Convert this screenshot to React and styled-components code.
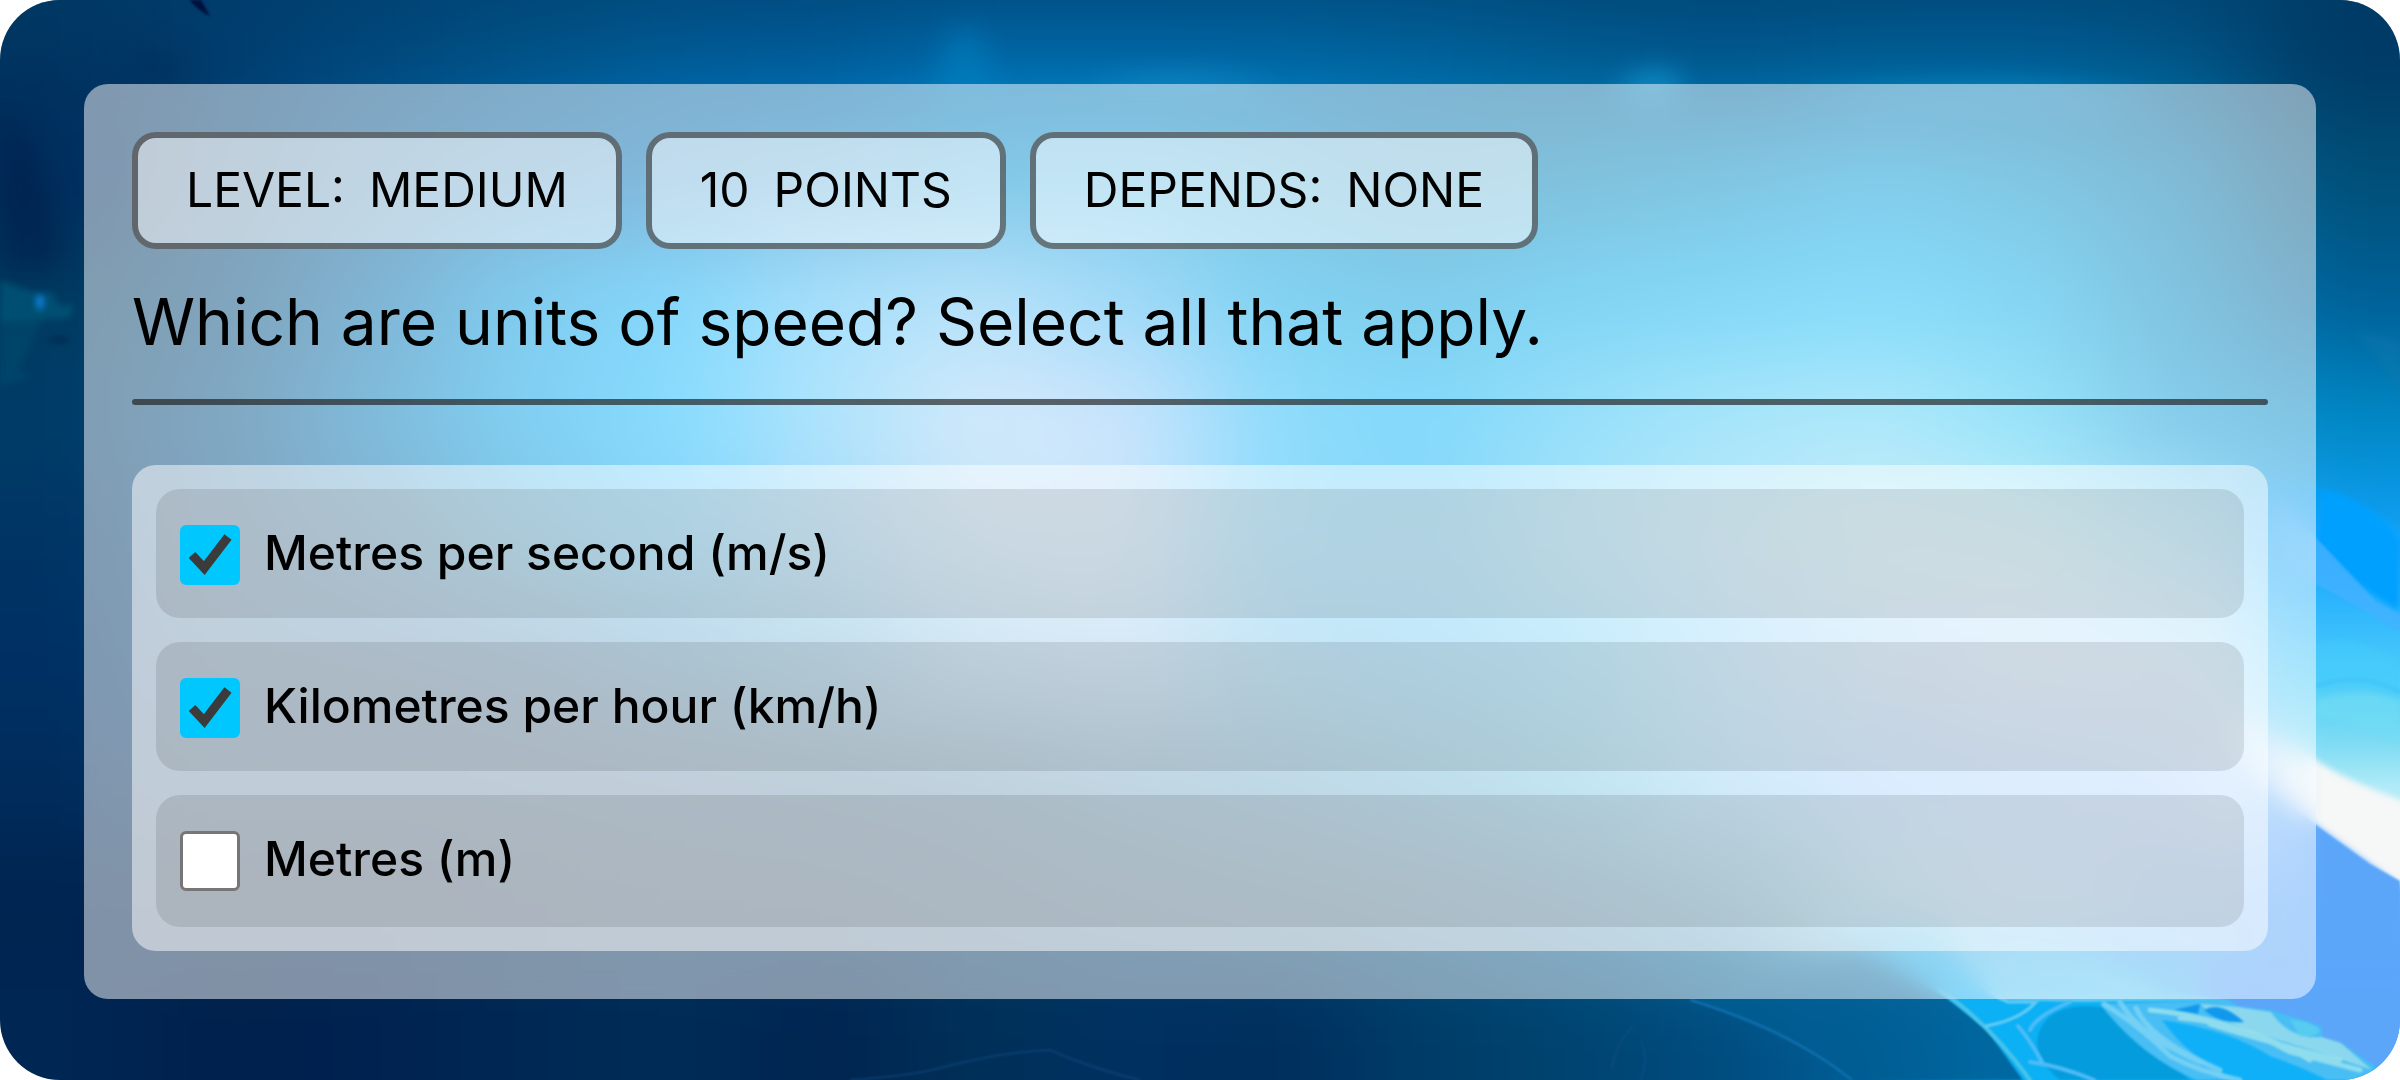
import React, { useState } from "react";
import styled, { createGlobalStyle } from "styled-components";

const GlobalStyle = createGlobalStyle`
  *, *::before, *::after { box-sizing: border-box; }
  body {
    margin: 0;
    background: #fff;
    color: #000;
    font-family: Inter, "Liberation Sans", sans-serif;
  }
`;

/* Soft colour field of the ice cave, one entry for each 150 x 120 cell. */
const CAVE = [
  "00335f 003d70 004a80 00568c 005f9c 0060a0 006cae 006cae 006cac 0068a4 006098 005a92 006098 00609a 005a8c 003a66",
  "002c5c 013f71 015791 0165a9 0171b9 047fc1 0191d1 0497d5 0189c5 0179b1 0185b9 018dc5 049bd9 0191c9 0179b1 005078",
  "003a60 014979 0169a9 019be1 09b1f9 51c1f9 71c5f5 41b5f1 01a5e5 019bd9 01a9e9 05b1f1 0db9f5 09ade9 0189c1 006098",
  "003c68 014f85 0179b9 01a1e9 11b9fd 61c9f9 a8d4f5 9acafa 21b9f9 05b5f9 31c1f5 51cdf5 61d1f5 31c9f5 0999d9 0088c4",
  "003464 004a81 00609f 008bc8 07a9f9 47b1ef 84c7f0 8ecaf4 18b2f6 11a9ef 47c3f4 71ccf2 8ed8f0 88dcf0 50c8f2 10a0f8",
  "003064 004073 004278 004a84 00639f 117cb1 479bd0 60a4da 1a96d5 089fe6 1ab1ef 5cc0fa 86c4f4 a0caf6 98d0f8 60d0f8",
  "002c5c 003664 003460 003864 003a68 00406e 004678 005889 00659b 0077b1 0896c8 47b1ef 6ab1fc 72b4fc 80b8fc c0e8ff",
  "002450 00284c 00264e 002c54 00305c 00315c 003964 00416f 004973 01517f 015d91 0979a9 51b9e1 82bef0 61a9f5 60a8fa",
  "002654 00204c 002250 002854 002c58 002450 003058 003060 002e5c 003c68 004470 004c80 006098 00a0e8 50c0f0 58a4f8",
].map((row) => row.split(" "));

const Backdrop = styled.svg`
  position: absolute;
  inset: 0;
  width: 100%;
  height: 100%;
`;

function IceCave() {
  return (
    <Backdrop viewBox="0 0 2400 1080" preserveAspectRatio="none" aria-hidden="true">
      <defs>
        <filter id="field" filterUnits="userSpaceOnUse" x="-300" y="-300" width="3000" height="1680" colorInterpolationFilters="sRGB">
          <feGaussianBlur stdDeviation="58 46" />
        </filter>
        <filter id="soft" filterUnits="userSpaceOnUse" x="-100" y="-100" width="2600" height="1280" colorInterpolationFilters="sRGB">
          <feGaussianBlur stdDeviation="14" />
        </filter>
        <filter id="mist" filterUnits="userSpaceOnUse" x="-100" y="-100" width="2600" height="1280" colorInterpolationFilters="sRGB">
          <feGaussianBlur stdDeviation="3" />
        </filter>
        <filter id="edge" filterUnits="userSpaceOnUse" x="-100" y="-100" width="2600" height="1280" colorInterpolationFilters="sRGB">
          <feGaussianBlur stdDeviation="1" />
        </filter>
        <linearGradient id="roof" x1="0" y1="0" x2="0" y2="1">
          <stop offset="0" stopColor="#003c68" stopOpacity="0.5" />
          <stop offset="1" stopColor="#003c68" stopOpacity="0" />
        </linearGradient>
        <linearGradient id="wave" x1="0" y1="485" x2="0" y2="790" gradientUnits="userSpaceOnUse">
          <stop offset="0" stopColor="#009cf4" />
          <stop offset="0.25" stopColor="#1ca8fc" />
          <stop offset="0.5" stopColor="#3cc0fc" />
          <stop offset="0.68" stopColor="#54d0f8" />
          <stop offset="0.85" stopColor="#80dcf4" />
          <stop offset="1" stopColor="#b4ecf8" />
        </linearGradient>
        <linearGradient id="fromLeft" x1="2220" y1="0" x2="2324" y2="0" gradientUnits="userSpaceOnUse">
          <stop offset="0" stopColor="#000" />
          <stop offset="1" stopColor="#fff" />
        </linearGradient>
        <linearGradient id="fromTop" x1="0" y1="890" x2="0" y2="1000" gradientUnits="userSpaceOnUse">
          <stop offset="0" stopColor="#000" />
          <stop offset="1" stopColor="#fff" />
        </linearGradient>
        <mask id="fadeLeft" maskUnits="userSpaceOnUse" x="2000" y="400" width="400" height="680">
          <rect x="2000" y="400" width="400" height="680" fill="url(#fromLeft)" />
        </mask>
        <mask id="fadeTop" maskUnits="userSpaceOnUse" x="1600" y="860" width="800" height="220">
          <rect x="1600" y="860" width="800" height="220" fill="url(#fromTop)" />
        </mask>
      </defs>
      <g filter="url(#field)">
        {CAVE.map((row, j) =>
          row.map((c, i) => {
            const left = i === 0 ? -300 : i * 150;
            const top = j === 0 ? -300 : j * 120;
            const right = i === 15 ? 2700 : (i + 1) * 150 + 1;
            const bottom = j === 8 ? 1380 : (j + 1) * 120 + 1;
            return <rect key={`${i}-${j}`} x={left} y={top} width={right - left} height={bottom - top} fill={`#${c}`} />;
          })
        )}
      </g>
      <rect width="2400" height="84" fill="url(#roof)" />

      {/* light falling from the roof */}
      <g filter="url(#soft)">
        <path d="M1080 90 Q1180 66 1280 90 Z" fill="#20a0d4" opacity="0.7" />
        <path d="M1610 100 Q1640 64 1676 76 L1680 100 Z" fill="#1090cc" />
        <path d="M1790 110 Q2000 66 2170 110 Z" fill="#0890cc" opacity="0.8" />
        <path d="M930 100 L950 30 L980 30 L1000 100 Z" fill="#0084c4" opacity="0.5" />
        <path d="M0 100 Q60 180 60 270 L0 270 Z" fill="#001c48" opacity="0.5" />
        <path d="M130 60 Q160 40 190 66 L170 84 H130 Z" fill="#002c54" opacity="0.5" />
      </g>
      <g filter="url(#mist)">
        <path d="M2350 332 Q2380 334 2400 342 V400 Q2380 350 2350 332 Z" fill="#1078ac" opacity="0.4" />
      </g>
      <path d="M189 0 H201 L210 16 Q200 12 189 0 Z" fill="#00103c" filter="url(#edge)" />

      {/* the fish at the left wall */}
      <g filter="url(#mist)">
        <path d="M0 280 Q24 290 40 293 L52 292 L60 306 L74 304 L70 318 L44 318 L30 346 L18 372 L36 376 L0 386 Z" fill="#005a78" opacity="0.3" />
        <path d="M0 280 Q24 290 40 293 L52 292 L60 306 L74 304 L70 318 L0 322 Z" fill="#005c7c" opacity="0.5" />
        <path d="M50 338 h18 v4 h-18 Z" fill="#002448" />
        <ellipse cx="40" cy="302" rx="4" ry="8" fill="#0c80d8" />
      </g>

      {/* the bright wall at the right */}
      <g mask="url(#fadeLeft)">
        <g filter="url(#mist)">
          <path d="M2150 470 Q2290 480 2316 487 Q2370 500 2420 546 V840 L2316 790 L2150 640 Z" fill="url(#wave)" />
          <path d="M2326 490 Q2370 500 2400 540 V612 Q2350 585 2316 540 Z" fill="#00a0ff" />
        </g>
        <g filter="url(#edge)">
          <path d="M2270 490 Q2340 562 2376 602 L2400 614 V632 Q2350 602 2316 584 L2270 560 Z" fill="#44b2ff" opacity="0.8" />
          <path d="M2316 686 Q2360 670 2400 692" fill="none" stroke="#30b0e8" strokeWidth="4" opacity="0.4" />
        </g>
        <g filter="url(#mist)">
          <path d="M2316 644 Q2360 634 2400 662 V700 Q2360 676 2316 690 Z" fill="#44ccfc" opacity="0.6" />
          <path d="M2316 700 Q2360 686 2400 700 V744 Q2360 724 2316 716 Z" fill="#70dcf4" opacity="0.7" />
          <path d="M2150 640 Q2250 730 2316 760 Q2350 784 2420 806 V900 L2316 824 L2150 720 Z" fill="#f6f7f7" />
        </g>
        <path d="M2190 720 Q2270 790 2316 825 L2370 864 L2400 881 V1080 H2190 Z" fill="#5ca6fa" filter="url(#edge)" />
      </g>

      {/* the foreground ice */}
      <g mask="url(#fadeTop)">
        <g filter="url(#edge)">
          <path d="M1690 1000 L1865 950 L1944 996 Q1990 1024 2029 1080 H1850 Q1800 1040 1690 1000 Z" fill="#005c92" opacity="0.8" />
          <path d="M1690 1000 Q1790 1030 1852 1080" fill="none" stroke="#1474b4" strokeWidth="2" />
          <path d="M2200 960 H2400 V1080 H2200 Z" fill="#5ca6fa" />
          <path d="M1800 910 L2020 920 L2050 935 L2100 955 L2130 970 L2165 990 L2229 1000 L2239 1007 L2271 1010 L2306 1021 L2322 1027 L2322 1037 L2341 1043 L2376 1067 L2400 1090 H2030 L1987 1030 L1944 996 L1865 950 Z" fill="#0cb0f4" />
          <path d="M1970 900 L2020 920 L2050 935 L2100 955 L2130 970 L2165 990 L2229 1000 L2080 1002 L2000 1000 Q1970 970 1940 930 Z" fill="#74d0f4" opacity="0.8" />
          <path d="M2050 1016 Q2070 1002 2108 1008 Q2140 1040 2190 1080 H2060 Q2020 1046 2050 1016 Z" fill="#049cdc" />
          <path d="M2100 1004 L2229 1000 L2239 1007 L2271 1010 L2306 1021 L2322 1027 L2322 1037 L2341 1043 L2376 1067 L2366 1080 H2196 Q2140 1056 2100 1004 Z" fill="#48bef4" />
          <path d="M2162 1020 Q2230 1030 2270 1056 Q2310 1070 2330 1082 H2240 Q2190 1060 2162 1020 Z" fill="#10b0f8" />
          <path d="M2200 1004 Q2212 1016 2250 1032 Q2300 1046 2372 1070 L2341 1043 L2322 1037 Q2290 1040 2271 1012 L2239 1007 Z" fill="#98dcec" opacity="0.85" />
          <path d="M2290 1020 Q2310 1020 2320 1030 Q2316 1038 2300 1036 Z" fill="#58ccf0" />
          <path d="M2204 1010 Q2220 1000 2244 1022 Q2220 1024 2204 1010 Z" fill="#1098ec" />
          <path d="M2174 1010 L2200 1004 L2198 1014 Z" fill="#1098ec" />
        </g>
        <g filter="url(#edge)" fill="none" strokeLinecap="round">
          <path d="M1940 990 Q1990 1024 2030 1080" stroke="#4cc4e8" strokeWidth="4" />
          <path d="M1948 950 Q1980 990 2008 1002 H2036 Q2020 1020 1986 1026" stroke="#68ccf4" strokeWidth="3" />
          <path d="M2070 1002 Q2036 1016 2030 1030 M2018 1026 Q2030 1040 2042 1062 M2030 1062 Q2060 1066 2094 1080" stroke="#50bcf8" strokeWidth="4" />
          <path d="M2104 1004 Q2140 1026 2170 1056 Q2200 1072 2240 1080 M2120 1002 Q2140 1036 2200 1062 M2136 1008 Q2150 1040 2220 1070" stroke="#80d4f4" strokeWidth="5" opacity="0.8" />
          <path d="M2150 1010 Q2230 1018 2290 1052 L2360 1070 M2180 1018 Q2250 1024 2310 1060 M2210 1024 Q2260 1040 2340 1060" stroke="#a0e4ec" strokeWidth="5" opacity="0.8" />
        </g>
      </g>

      {/* ridges in the dark floor */}
      <g filter="url(#edge)" fill="none" stroke="#14508c" strokeWidth="2" opacity="0.5">
        <path d="M850 1080 Q910 1076 940 1068 Q1000 1052 1050 1050 Q1090 1068 1140 1080" />
        <path d="M1612 1070 Q1616 1040 1634 1026 M1640 1080 Q1650 1060 1640 1040" />
      </g>
    </Backdrop>
  );
}

const Page = styled.main`
  position: relative;
  isolation: isolate;
  min-height: 100vh;
  padding: 84px 84px 81px;
  border-radius: 60px;
  overflow: hidden;
`;

const Panel = styled.form`
  position: relative;
  padding: 48px;
  border-radius: 24px;
  background: rgba(255, 255, 255, 0.5);
  backdrop-filter: blur(12px);
`;

const Tags = styled.ul`
  display: flex;
  flex-wrap: wrap;
  gap: 24px;
  margin: 0;
  padding: 0;
  list-style: none;
`;

const Tag = styled.li`
  display: flex;
  gap: 24px;
  padding: 23px 48px 24px;
  border: 6px solid rgba(0, 0, 0, 0.5);
  border-radius: 24px;
  background: rgba(255, 255, 255, 0.5);
  font-size: 48px;
  line-height: 58px;
`;

const Question = styled.h1`
  margin: 24px 0 28px;
  font-size: 64px;
  font-weight: 400;
  line-height: 98px;
`;

const Divider = styled.hr`
  height: 6px;
  margin: 0 0 60px;
  border: 0;
  border-radius: 3px;
  background: rgba(28, 28, 28, 0.66);
`;

const Options = styled.div`
  display: flex;
  flex-direction: column;
  gap: 24px;
  padding: 24px;
  border-radius: 24px;
  background: rgba(255, 255, 255, 0.5);
`;

const Option = styled.label`
  display: flex;
  align-items: flex-start;
  gap: 24px;
  padding: 36px 24px 33px;
  border-radius: 24px;
  background: rgba(0, 0, 0, 0.1);
  font-size: 48px;
  font-weight: 500;
  line-height: 56px;
  cursor: pointer;

  &:last-child { padding-bottom: 36px; }
`;

const Tick = styled.span`
  display: grid;
  flex: none;
  width: 60px;
  height: 60px;

  > * { grid-area: 1 / 1; }
  svg { pointer-events: none; }
`;

const Box = styled.input`
  appearance: none;
  width: 60px;
  height: 60px;
  margin: 0;
  border: 3px solid #767676;
  border-radius: 6px;
  background: #fff;

  &:checked { border-color: #00c8ff; background: #00c8ff; }
`;

const TAGS = [
  ["LEVEL:", "MEDIUM"],
  ["10", "POINTS"],
  ["DEPENDS:", "NONE"],
];

const CHOICES = ["Metres per second (m/s)", "Kilometres per hour (km/h)", "Metres (m)"];

export default function App() {
  const [chosen, setChosen] = useState([true, true, false]);
  const toggle = (i) => setChosen(chosen.map((v, k) => (k === i ? !v : v)));

  return (
    <>
      <GlobalStyle />
      <Page>
        <IceCave />
        <Panel>
          <Tags>
            {TAGS.map(([first, second]) => (
              <Tag key={first}>
                <span>{first}</span> <span>{second}</span>
              </Tag>
            ))}
          </Tags>
          <Question id="question">Which are units of speed? Select all that apply.</Question>
          <Divider />
          <Options role="group" aria-labelledby="question">
            {CHOICES.map((text, i) => (
              <Option key={text} htmlFor={`choice-${i}`}>
                <Tick>
                  <Box id={`choice-${i}`} type="checkbox" checked={chosen[i]} onChange={() => toggle(i)} />
                  {chosen[i] && (
                    <svg width="60" height="60" viewBox="0 0 60 60" aria-hidden="true">
                      <path d="M12 30 L24.3 43 L48 12" fill="none" stroke="#3b3b3b" strokeWidth="9" />
                    </svg>
                  )}
                </Tick>
                <span>{text}</span>
              </Option>
            ))}
          </Options>
        </Panel>
      </Page>
    </>
  );
}
